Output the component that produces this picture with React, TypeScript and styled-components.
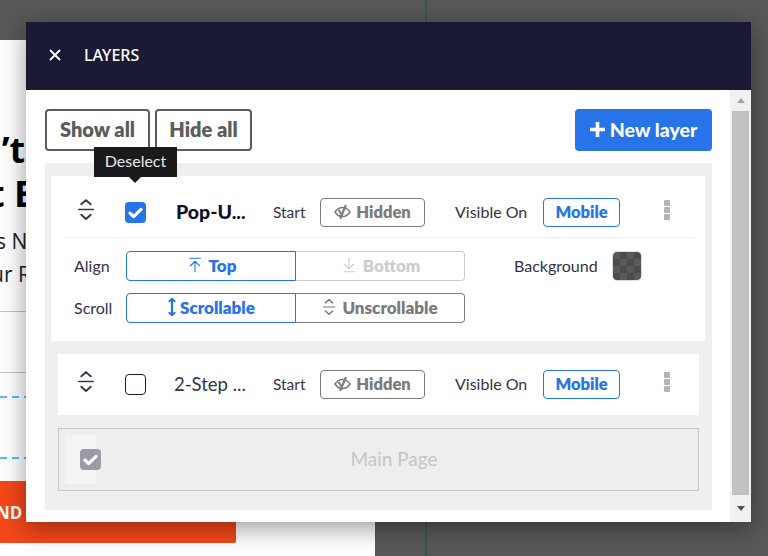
import React from 'react';
import styled, { createGlobalStyle } from 'styled-components';
import { ArrowDownToLine, ArrowUpToLine, X } from 'lucide-react';

const GlobalStyle = createGlobalStyle`
  html, body {
    margin: 0;
    padding: 0;
    height: 556px;
    overflow: hidden;
  }
  * {
    box-sizing: border-box;
  }
`;

function DragIcon({ size = 18 }: { size?: number }) {
  return (
    <svg width={size} height={size * 1.28} viewBox="0 0 16 22" fill="none" stroke="currentColor" strokeWidth="1.8" strokeLinecap="round" strokeLinejoin="round">
      <path d="M3.5 6 8 2l4.5 4" />
      <path d="M1 11h14" strokeWidth="1.3" />
      <path d="M3.5 16 8 20l4.5-4" />
    </svg>
  );
}

function HiddenIcon() {
  return (
    <svg width="17" height="14" viewBox="0 0 17 14" fill="none" stroke="currentColor" strokeWidth="1.5" strokeLinecap="round">
      <path d="M1 7c2-3 4.500-4.500 7.500-4.500S14 4 16 7c-2 3-4.500 4.500-7.500 4.500S3 10 1 7z" />
      <path d="M11.500 1 6.500 13" strokeWidth="2.200" />
      <path d="M5 5.500 7.500 9.500" strokeWidth="2" />
    </svg>
  );
}

function ScrollIcon() {
  return (
    <svg width="10" height="20" viewBox="0 0 10 20" fill="none" stroke="currentColor" strokeWidth="2.200" strokeLinecap="round" strokeLinejoin="round">
      <path d="M5 2v16" />
      <path d="M2.500 4 5 2l2.500 2" />
      <path d="M2.500 16 5 18l2.500-2" />
    </svg>
  );
}

function Checkbox({ checked, muted }: { checked?: boolean; muted?: boolean }) {
  return (
    <CheckboxBox $checked={checked} $muted={muted}>
      {checked && (
        <svg width="15" height="12" viewBox="0 0 15 12" fill="none" stroke="#fff" strokeWidth="3.200" strokeLinecap="round" strokeLinejoin="round">
          <path d="M2 6.200 5.600 9.600 13 2.400" />
        </svg>
      )}
    </CheckboxBox>
  );
}

function LayerRow({ title, active, tooltip }: { title: string; active?: boolean; tooltip?: boolean }) {
  return (
    <RowGrid>
      <DragCell>
        <DragIcon />
      </DragCell>
      <CheckCell>
        {tooltip && <Tooltip>Deselect</Tooltip>}
        <Checkbox checked={active} />
      </CheckCell>
      <LayerTitle $active={active}>{title}</LayerTitle>
      <FieldLabel>Start</FieldLabel>
      <OutlineButton>
        <HiddenIcon />
        Hidden
      </OutlineButton>
      <VisibleLabel>Visible On</VisibleLabel>
      <OutlineButton $blue>Mobile</OutlineButton>
      <Kebab>
        <span />
        <span />
        <span />
      </Kebab>
    </RowGrid>
  );
}

export default function App() {
  return (
    <Stage>
      <GlobalStyle />
      <PagePanel>
        <Headline $shift={-22}>n’t</Headline>
        <Headline $shift={-11}>t E</Headline>
        <Lead $shift={-4} $first>s N</Lead>
        <Lead $shift={-9}>ur R</Lead>
        <PageRule $top={20} />
        <PageRule $top={60} />
        <DashedRule $top={23} />
        <DashedRule $top={59} />
        <CtaButton>
          <CtaText>SEND</CtaText>
        </CtaButton>
      </PagePanel>
      <GuideLine />

      <Modal>
        <ModalHeader>
          <X size={18} strokeWidth={2.4} color="#fff" />
          <ModalTitle>LAYERS</ModalTitle>
        </ModalHeader>
        <ModalBody>
          <Content>
            <Toolbar>
              <ToolbarGroup>
                <GhostButton $width={105}>Show all</GhostButton>
                <GhostButton $width={97}>Hide all</GhostButton>
              </ToolbarGroup>
              <PrimaryButton>
                <svg width="15" height="15" viewBox="0 0 15 15" fill="#fff">
                  <path d="M5.700 0h3.600v5.700H15v3.600H9.300V15H5.700V9.300H0V5.700h5.700z" />
                </svg>
                New layer
              </PrimaryButton>
            </Toolbar>
            <LayerList>
              <SelectedCard>
                <LayerRow title="Pop-U..." active tooltip />
                <RowDivider />
                <OptionsGrid>
                  <OptionLabel>Align</OptionLabel>
                  <SegmentGroup>
                    <Segment $tone="blue" $side="left" $gap={5}>
                      <ArrowUpToLine size={18} strokeWidth={1.5} />
                      Top
                    </Segment>
                    <Segment $tone="disabled" $side="right" $gap={5}>
                      <ArrowDownToLine size={18} strokeWidth={1.5} />
                      Bottom
                    </Segment>
                  </SegmentGroup>
                  <BackgroundLabel>Background</BackgroundLabel>
                  <Swatch />
                  <OptionLabel>Scroll</OptionLabel>
                  <SegmentGroup>
                    <Segment $tone="blue" $side="left" $gap={3}>
                      <ScrollIcon />
                      Scrollable
                    </Segment>
                    <Segment $tone="gray" $side="right" $gap={6}>
                      <DragIcon size={14} />
                      Unscrollable
                    </Segment>
                  </SegmentGroup>
                </OptionsGrid>
              </SelectedCard>
              <PlainCard>
                <LayerRow title="2-Step ..." />
              </PlainCard>
              <MainPageCard>
                <MainHandle>
                  <Checkbox checked muted />
                </MainHandle>
                <MainPageLabel>Main Page</MainPageLabel>
              </MainPageCard>
            </LayerList>
          </Content>
          <ScrollTrack>
            <ScrollArrow $up />
            <ScrollThumb />
            <ScrollArrow />
          </ScrollTrack>
        </ModalBody>
      </Modal>
    </Stage>
  );
}

const Stage = styled.div`
  position: relative;
  display: flex;
  width: 768px;
  height: 556px;
  overflow: hidden;
  background: #585858;
`;

const PagePanel = styled.div`
  flex: 0 0 375px;
  margin-top: 40px;
  padding-top: 88px;
  background: #fff;
  overflow: hidden;
  white-space: nowrap;
`;

const GuideLine = styled.div`
  flex: 0 0 2px;
  margin-left: 50px;
  background: #2f5b5b;
`;

const Headline = styled.div<{ $shift: number }>`
  margin-left: ${(p) => p.$shift}px;
  font-family: 'Open Sans', sans-serif;
  font-size: 36px;
  font-weight: 700;
  line-height: 44px;
  color: #000;
`;

const Lead = styled.div<{ $shift: number; $first?: boolean }>`
  margin-left: ${(p) => p.$shift}px;
  margin-top: ${(p) => (p.$first ? '9px' : '0')};
  font-family: 'Open Sans', sans-serif;
  font-size: 21px;
  line-height: 33px;
  color: #222;
`;

const PageRule = styled.div<{ $top: number }>`
  margin-top: ${(p) => p.$top}px;
  border-top: 1px solid #c4c4c4;
`;

const DashedRule = styled.div<{ $top: number }>`
  margin-top: ${(p) => p.$top}px;
  height: 2px;
  background: repeating-linear-gradient(90deg, #4fc0f5 0 7px, transparent 7px 12px);
`;

const CtaButton = styled.div`
  display: flex;
  align-items: center;
  width: 236px;
  height: 62px;
  margin-top: 22px;
  border-radius: 0 0 2px 0;
  background: #f4481a;
`;

const CtaText = styled.span`
  margin-left: -23px;
  font-family: 'Open Sans', sans-serif;
  font-size: 17px;
  font-weight: 700;
  color: #fff;
`;

const Modal = styled.div`
  position: absolute;
  left: 26px;
  top: 22px;
  display: flex;
  flex-direction: column;
  width: 725px;
  height: 500px;
  background: #fff;
  box-shadow: 0 6px 24px rgba(0, 0, 0, 0.4);
`;

const ModalHeader = styled.header`
  display: flex;
  flex: 0 0 68px;
  align-items: center;
  padding: 0 0 2px 20px;
  background: #1a1a35;
`;

const ModalTitle = styled.h2`
  margin: 0 0 0 20px;
  font-family: 'Noto Sans', sans-serif;
  font-size: 16px;
  font-weight: 500;
  color: #fff;
`;

const ModalBody = styled.div`
  display: flex;
  flex: 1;
  min-height: 0;
`;

const Content = styled.div`
  flex: 1;
  padding: 19px 18px 12px 19px;
`;

const Toolbar = styled.div`
  display: flex;
  justify-content: space-between;
  margin-bottom: 12px;
`;

const ToolbarGroup = styled.div`
  display: flex;
  gap: 5px;
`;

const GhostButton = styled.button<{ $width: number }>`
  width: ${(p) => p.$width}px;
  height: 42px;
  padding: 0 0 2px;
  border: 2px solid #5c5c5c;
  border-radius: 4px;
  background: #fff;
  font-family: Lato, sans-serif;
  font-size: 20px;
  font-weight: 800;
  color: #5c5c5c;
`;

const PrimaryButton = styled.button`
  display: flex;
  align-items: center;
  justify-content: center;
  gap: 5px;
  width: 137px;
  height: 42px;
  padding: 0 0 2px;
  border: 0;
  border-radius: 4px;
  background: #2673ea;
  font-family: Lato, sans-serif;
  font-size: 19.500px;
  font-weight: 900;
  color: #fff;
`;

const LayerList = styled.div`
  display: flex;
  flex-direction: column;
  height: 347px;
  padding: 13px 7px 0 6px;
  background: #efefef;
`;

const SelectedCard = styled.section`
  height: 165px;
  padding: 22px 12px 0 13px;
  background: #fff;
`;

const PlainCard = styled.section`
  height: 61px;
  margin: 13px 6px 0 7px;
  padding: 16px 0 0 6px;
  background: #fff;
`;

const RowGrid = styled.div`
  display: grid;
  grid-template-columns: 44px 65px 100px 47px 105px 118px 77px 1fr;
  align-items: center;
  height: 29px;
  font-family: Lato, sans-serif;
`;

const DragCell = styled.div`
  display: flex;
  justify-content: center;
  margin-top: -6px;
  color: #34344a;
`;

const CheckCell = styled.div`
  position: relative;
  padding-left: 17px;
`;

const CheckboxBox = styled.div<{ $checked?: boolean; $muted?: boolean }>`
  display: flex;
  flex-shrink: 0;
  align-items: center;
  justify-content: center;
  width: 21px;
  height: 21px;
  border-radius: 4px;
  border: ${(p) => (p.$checked ? '0' : '1.5px solid #1a1a35')};
  background: ${(p) => (p.$muted ? '#9b9ba6' : p.$checked ? '#2673ea' : '#fff')};
`;

const Tooltip = styled.div`
  position: absolute;
  left: -14px;
  top: -55px;
  width: 83px;
  height: 30px;
  background: #1a1a1a;
  font-family: Lato, sans-serif;
  font-size: 16px;
  line-height: 28px;
  text-align: center;
  color: #e8e8e8;

  &::after {
    content: '';
    position: absolute;
    left: 35px;
    top: 30px;
    border-style: solid;
    border-width: 6px 6px 0;
    border-color: #1a1a1a transparent transparent;
  }
`;

const LayerTitle = styled.div<{ $active?: boolean }>`
  padding: 0 0 2px ${(p) => (p.$active ? '3px' : '1px')};
  font-size: ${(p) => (p.$active ? '19.500px' : '18.500px')};
  font-weight: ${(p) => (p.$active ? 900 : 400)};
  color: ${(p) => (p.$active ? '#0f0f28' : '#33334a')};
  white-space: nowrap;
`;

const FieldLabel = styled.div`
  padding-bottom: 2px;
  font-size: 15.500px;
  color: #333346;
  white-space: nowrap;
`;

const VisibleLabel = styled(FieldLabel)`
  padding-left: 30px;
  font-size: 16px;
`;

const OutlineButton = styled.button<{ $blue?: boolean }>`
  display: flex;
  align-items: center;
  justify-content: center;
  gap: 5px;
  height: 29px;
  padding: 0 0 2px;
  border: 1px solid ${(p) => (p.$blue ? '#2673ea' : '#7b7b7b')};
  border-radius: 4px;
  background: #fff;
  font-family: Lato, sans-serif;
  font-size: 16.500px;
  font-weight: 800;
  color: ${(p) => (p.$blue ? '#2673ea' : '#7b7b7b')};
`;

const Kebab = styled.div`
  display: flex;
  flex-direction: column;
  gap: 1px;
  width: 6px;
  margin: -6px 0 0 44px;

  span {
    height: 6px;
    border-radius: 1px;
    background: #b7b3ae;
  }
`;

const RowDivider = styled.hr`
  margin: 10px 0 0;
  border: 0;
  border-top: 1px solid #eee;
  width: 629px;
`;

const OptionsGrid = styled.div`
  display: grid;
  grid-template-columns: 52px 339px 147px 30px;
  grid-template-rows: 30px 30px;
  row-gap: 12px;
  align-items: center;
  margin-top: 13px;
  padding-left: 10px;
  font-family: Lato, sans-serif;
`;

const OptionLabel = styled.div`
  padding-bottom: 2px;
  font-size: 16px;
  color: #333346;
`;

const BackgroundLabel = styled(OptionLabel)`
  padding-left: 49px;
  white-space: nowrap;
`;

const SegmentGroup = styled.div`
  display: flex;
  height: 30px;
`;

const segmentColors = {
  blue: '#2673ea',
  gray: '#7b7b7b',
  disabled: '#cdcdcd',
};

const Segment = styled.button<{ $tone: keyof typeof segmentColors; $side: 'left' | 'right'; $gap: number }>`
  display: flex;
  flex: 1;
  align-items: center;
  justify-content: center;
  gap: ${(p) => p.$gap}px;
  padding: 0 0 2px;
  border: 1px solid ${(p) => segmentColors[p.$tone]};
  border-left-width: ${(p) => (p.$side === 'right' ? 0 : '1px')};
  border-radius: ${(p) => (p.$side === 'left' ? '4px 0 0 4px' : '0 4px 4px 0')};
  background: #fff;
  font-family: Lato, sans-serif;
  font-size: 17px;
  font-weight: 800;
  color: ${(p) => segmentColors[p.$tone]};
`;

const Swatch = styled.div`
  width: 30px;
  height: 30px;
  border: 1px solid #ddd;
  border-radius: 5px;
  background: repeating-conic-gradient(#4c4c4c 0 25%, #5a5a5a 0 50%) 0 0 / 14px 14px;
`;

const MainPageCard = styled.section`
  display: flex;
  align-items: center;
  height: 63px;
  margin: 13px 6px 0 7px;
  padding-left: 6px;
  border: 1px solid #c8c8c8;
  background: #eee;
`;

const MainHandle = styled.div`
  display: flex;
  align-items: center;
  width: 31px;
  height: 49px;
  padding-left: 15px;
  border-radius: 2px;
  background: #f4f4f4;
`;

const MainPageLabel = styled.div`
  flex: 1;
  margin-right: 6px;
  padding-bottom: 3px;
  text-align: center;
  font-family: Lato, sans-serif;
  font-size: 19px;
  color: #c6c6c6;
`;

const ScrollTrack = styled.div`
  display: flex;
  flex: 0 0 21px;
  flex-direction: column;
  align-items: center;
  background: #f1f1f1;
`;

const ScrollThumb = styled.div`
  flex: 0 0 384px;
  width: 17px;
  background: #c1c1c1;
`;

const ScrollArrow = styled.div<{ $up?: boolean }>`
  display: flex;
  flex: 0 0 ${(p) => (p.$up ? '21px' : '27px')};
  align-items: center;
  justify-content: center;
  width: 9px;

  &::before {
    content: '';
    border-style: solid;
    border-color: transparent;
    border-width: ${(p) => (p.$up ? '0 4.500px 5px' : '5px 4.500px 0')};
    ${(p) => (p.$up ? 'border-bottom-color: #a3a3a3;' : 'border-top-color: #505050;')}
  }
`;
